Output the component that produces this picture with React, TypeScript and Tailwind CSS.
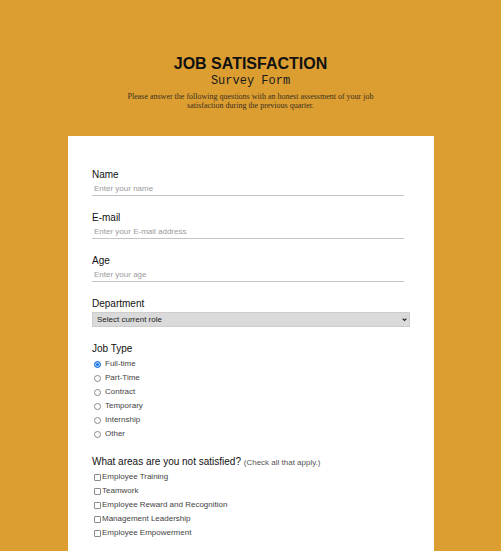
import React from "react";

const JOB_TYPES = ["Full-time", "Part-Time", "Contract", "Temporary", "Internship", "Other"];
const AREAS = [
  "Employee Training",
  "Teamwork",
  "Employee Reward and Recognition",
  "Management Leadership",
  "Employee Empowerment",
];

function TextField({ label, placeholder, type = "text" }: { label: string; placeholder: string; type?: string }) {
  return (
    <div className="mb-[15px]">
      <label className="block text-[10px] leading-[13px] text-[#111]">{label}</label>
      <input
        type={type}
        placeholder={placeholder}
        className="block h-[15px] w-[312px] border-b border-[#c4c4c4] bg-transparent pl-[2px] text-[8px] leading-[14px] text-[#333] outline-none placeholder:text-[#9a9a9a]"
      />
    </div>
  );
}

export default function App() {
  return (
    <div className="min-h-[551px] bg-[#dc9e31] font-['Liberation_Sans',Arial,sans-serif]">
      <div className="flex flex-col items-center pt-[55px]">
        <h1 className="text-[16px] font-bold leading-[18px] text-[#111]">JOB SATISFACTION</h1>
        <h2 className="font-['Liberation_Mono',monospace] text-[12px] leading-[16px] text-[#1a1a1a]">
          Survey Form
        </h2>
        <p className="mt-[3px] w-[255px] text-center font-['Liberation_Serif',serif] text-[8px] leading-[9px] text-[#3a3020]">
          Please answer the following questions with an honest assessment of your job satisfaction during the
          previous quarter.
        </p>
      </div>

      <form className="ml-[68px] mt-[26px] w-[366px] bg-white pl-[24px] pt-[32px] pb-[20px]">
        <TextField label="Name" placeholder="Enter your name" />
        <TextField label="E-mail" placeholder="Enter your E-mail address" type="email" />
        <TextField label="Age" placeholder="Enter your age" type="number" />

        <div className="mb-[15px]">
          <label className="block text-[10px] leading-[13px] text-[#111]">Department</label>
          <div className="relative mt-[2px] w-[318px]">
            <select
              defaultValue=""
              className="block h-[15px] w-full appearance-none rounded-none border border-[#cdcdcd] bg-[#dadada] pl-[4px] text-[8px] leading-[13px] text-[#222] outline-none"
            >
              <option value="" disabled>
                Select current role
              </option>
              <option>Student</option>
              <option>Full-time job</option>
              <option>Prefer not to say</option>
            </select>
            <svg
              viewBox="0 0 8 8"
              className="pointer-events-none absolute right-[3px] top-[5px] h-[5px] w-[5px]"
              fill="none"
              stroke="#222"
              strokeWidth="1.8"
            >
              <path d="M1 2.5 4 5.5 7 2.5" />
            </svg>
          </div>
        </div>

        <div className="mb-[14px]">
          <p className="text-[10px] leading-[13px] text-[#111]">Job Type</p>
          <div className="mt-[2px] flex flex-col">
            {JOB_TYPES.map((t, i) => (
              <label key={t} className="flex h-[14px] items-center gap-[4px] pl-[2px] text-[8px] text-[#444]">
                <input
                  type="radio"
                  name="jobType"
                  defaultChecked={i === 0}
                  className="h-[7px] w-[7px] appearance-none rounded-full border border-[#8a8a8a] bg-white checked:border-[#1a73e8] checked:bg-[#1a73e8] checked:shadow-[inset_0_0_0_1px_#bcd6fb]"
                />
                {t}
              </label>
            ))}
          </div>
        </div>

        <div>
          <p className="text-[10px] leading-[13px] text-[#111]">
            What areas are you not satisfied? <span className="text-[8px] text-[#555]">(Check all that apply.)</span>
          </p>
          <div className="mt-[1px] flex flex-col">
            {AREAS.map((a) => (
              <label key={a} className="flex h-[14px] items-center gap-[1px] pl-[2px] text-[8px] text-[#444]">
                <input
                  type="checkbox"
                  className="h-[7px] w-[7px] appearance-none rounded-[1px] border border-[#8a8a8a] bg-white checked:border-[#1a73e8] checked:bg-[#1a73e8]"
                />
                {a}
              </label>
            ))}
          </div>
        </div>
      </form>
    </div>
  );
}
